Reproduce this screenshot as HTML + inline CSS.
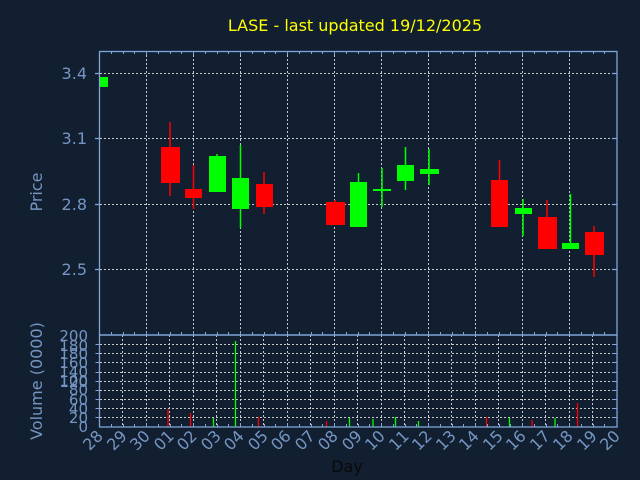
<!DOCTYPE html>
<html><head><meta charset="utf-8"><style>
html,body{margin:0;padding:0;background:#111f30;}
svg{display:block}
text{font-family:"DejaVu Sans","Liberation Sans",sans-serif;}
</style></head><body>
<svg width="640" height="480" viewBox="0 0 640 480" xmlns="http://www.w3.org/2000/svg">
<rect width="640" height="480" fill="#111f30"/>
<text x="355" y="31" fill="#ffff00" font-size="16" text-anchor="middle">LASE - last updated 19/12/2025</text>

<!-- price grid -->
<g stroke="#c8c8c8" stroke-width="1" stroke-dasharray="2,2" fill="none">
<line x1="100" y1="73.5" x2="617" y2="73.5"/>
<line x1="100" y1="138.5" x2="617" y2="138.5"/>
<line x1="100" y1="204.5" x2="617" y2="204.5"/>
<line x1="100" y1="269.5" x2="617" y2="269.5"/>
<line x1="146.5" y1="51" x2="146.5" y2="335"/>
<line x1="193.5" y1="51" x2="193.5" y2="335"/>
<line x1="240.5" y1="51" x2="240.5" y2="335"/>
<line x1="287.5" y1="51" x2="287.5" y2="335"/>
<line x1="334.5" y1="51" x2="334.5" y2="335"/>
<line x1="381.5" y1="51" x2="381.5" y2="335"/>
<line x1="428.5" y1="51" x2="428.5" y2="335"/>
<line x1="475.5" y1="51" x2="475.5" y2="335"/>
<line x1="522.5" y1="51" x2="522.5" y2="335"/>
<line x1="569.5" y1="51" x2="569.5" y2="335"/>
</g>
<!-- volume grid -->
<g stroke="#c8c8c8" stroke-width="1" stroke-dasharray="2,2" fill="none">
<line x1="100" y1="417.5" x2="617" y2="417.5"/>
<line x1="100" y1="408.5" x2="617" y2="408.5"/>
<line x1="100" y1="399.5" x2="617" y2="399.5"/>
<line x1="100" y1="390.5" x2="617" y2="390.5"/>
<line x1="100" y1="381.5" x2="617" y2="381.5"/>
<line x1="100" y1="372.5" x2="617" y2="372.5"/>
<line x1="100" y1="362.5" x2="617" y2="362.5"/>
<line x1="100" y1="353.5" x2="617" y2="353.5"/>
<line x1="100" y1="344.5" x2="617" y2="344.5"/>
<line x1="122.5" y1="335" x2="122.5" y2="427"/>
<line x1="146.5" y1="335" x2="146.5" y2="427"/>
<line x1="169.5" y1="335" x2="169.5" y2="427"/>
<line x1="193.5" y1="335" x2="193.5" y2="427"/>
<line x1="216.5" y1="335" x2="216.5" y2="427"/>
<line x1="240.5" y1="335" x2="240.5" y2="427"/>
<line x1="263.5" y1="335" x2="263.5" y2="427"/>
<line x1="287.5" y1="335" x2="287.5" y2="427"/>
<line x1="310.5" y1="335" x2="310.5" y2="427"/>
<line x1="334.5" y1="335" x2="334.5" y2="427"/>
<line x1="357.5" y1="335" x2="357.5" y2="427"/>
<line x1="381.5" y1="335" x2="381.5" y2="427"/>
<line x1="404.5" y1="335" x2="404.5" y2="427"/>
<line x1="428.5" y1="335" x2="428.5" y2="427"/>
<line x1="451.5" y1="335" x2="451.5" y2="427"/>
<line x1="475.5" y1="335" x2="475.5" y2="427"/>
<line x1="498.5" y1="335" x2="498.5" y2="427"/>
<line x1="522.5" y1="335" x2="522.5" y2="427"/>
<line x1="545.5" y1="335" x2="545.5" y2="427"/>
<line x1="569.5" y1="335" x2="569.5" y2="427"/>
<line x1="592.5" y1="335" x2="592.5" y2="427"/>
</g>

<!-- candles -->
<g stroke-width="1.5">
<rect x="100" y="77" width="8" height="10" fill="#00ff00"/>
<line x1="170" y1="122" x2="170" y2="196" stroke="#ff0000"/><rect x="161" y="147" width="19" height="36" fill="#ff0000"/>
<line x1="193.5" y1="165" x2="193.5" y2="209" stroke="#ff0000"/><rect x="185" y="189" width="17" height="9" fill="#ff0000"/>
<line x1="217" y1="154" x2="217" y2="192" stroke="#00ff00"/><rect x="209" y="156" width="17" height="36" fill="#00ff00"/>
<line x1="240.5" y1="145" x2="240.5" y2="228" stroke="#00ff00"/><rect x="232" y="178" width="17" height="31" fill="#00ff00"/>
<line x1="264" y1="172" x2="264" y2="214" stroke="#ff0000"/><rect x="256" y="184" width="17" height="23" fill="#ff0000"/>
<line x1="335" y1="200" x2="335" y2="225" stroke="#ff0000"/><rect x="326" y="202" width="19" height="23" fill="#ff0000"/>
<line x1="358.5" y1="173" x2="358.5" y2="227" stroke="#00ff00"/><rect x="350" y="182" width="17" height="45" fill="#00ff00"/>
<line x1="382" y1="168" x2="382" y2="207" stroke="#00ff00"/><rect x="373" y="189" width="18" height="2" fill="#00ff00"/>
<line x1="405.5" y1="147" x2="405.5" y2="190" stroke="#00ff00"/><rect x="397" y="165" width="17" height="16" fill="#00ff00"/>
<line x1="429" y1="149" x2="429" y2="185" stroke="#00ff00"/><rect x="420" y="169" width="19" height="5" fill="#00ff00"/>
<line x1="499.5" y1="160" x2="499.5" y2="227" stroke="#ff0000"/><rect x="491" y="180" width="17" height="47" fill="#ff0000"/>
<line x1="523" y1="199" x2="523" y2="236" stroke="#00ff00"/><rect x="515" y="208" width="17" height="6" fill="#00ff00"/>
<line x1="547" y1="200" x2="547" y2="249" stroke="#ff0000"/><rect x="538" y="217" width="19" height="32" fill="#ff0000"/>
<line x1="570.5" y1="194" x2="570.5" y2="249" stroke="#00ff00"/><rect x="562" y="243" width="17" height="6" fill="#00ff00"/>
<line x1="594" y1="226" x2="594" y2="277" stroke="#ff0000"/><rect x="585" y="232" width="19" height="23" fill="#ff0000"/>
</g>

<!-- volume bars -->
<g stroke-width="1.3">
<line x1="168" y1="409" x2="168" y2="427" stroke="#ff0000"/>
<line x1="190.5" y1="413" x2="190.5" y2="427" stroke="#ff0000"/>
<line x1="213.5" y1="418" x2="213.5" y2="427" stroke="#00ff00"/>
<line x1="235.5" y1="341" x2="235.5" y2="427" stroke="#00ff00"/>
<line x1="258.5" y1="417" x2="258.5" y2="427" stroke="#ff0000"/>
<line x1="326.5" y1="421" x2="326.5" y2="427" stroke="#ff0000"/>
<line x1="349.5" y1="418" x2="349.5" y2="427" stroke="#00ff00"/>
<line x1="373" y1="419" x2="373" y2="427" stroke="#00ff00"/>
<line x1="395.5" y1="417" x2="395.5" y2="427" stroke="#00ff00"/>
<line x1="418.5" y1="421" x2="418.5" y2="427" stroke="#00ff00"/>
<line x1="486.5" y1="417" x2="486.5" y2="427" stroke="#ff0000"/>
<line x1="509.5" y1="418" x2="509.5" y2="427" stroke="#00ff00"/>
<line x1="532" y1="420" x2="532" y2="427" stroke="#ff0000"/>
<line x1="555" y1="418" x2="555" y2="427" stroke="#00ff00"/>
<line x1="577.5" y1="403" x2="577.5" y2="427" stroke="#ff0000"/>
</g>

<!-- axes frames -->
<g stroke="#7fa6d8" stroke-width="1.3" fill="none">
<rect x="99.5" y="51.5" width="517.5" height="283.5"/>
<rect x="99.5" y="335" width="517.5" height="92"/>
<line x1="99.5" y1="73.5" x2="95" y2="73.5"/>
<line x1="99.5" y1="138.5" x2="95" y2="138.5"/>
<line x1="99.5" y1="204.5" x2="95" y2="204.5"/>
<line x1="99.5" y1="269.5" x2="95" y2="269.5"/>
<line x1="617" y1="73.5" x2="612" y2="73.5"/>
<line x1="617" y1="138.5" x2="612" y2="138.5"/>
<line x1="617" y1="204.5" x2="612" y2="204.5"/>
<line x1="617" y1="269.5" x2="612" y2="269.5"/>
</g>
<g stroke="#7fa6d8" stroke-width="1">
<path d="M111.5 51v3M123.5 51v3M134.5 51v3M146.5 51v4M158.5 51v3M170.5 51v3M181.5 51v3M193.5 51v4M205.5 51v3M217.5 51v3M228.5 51v3M240.5 51v4M252.5 51v3M264.5 51v3M275.5 51v3M287.5 51v4M299.5 51v3M311.5 51v3M322.5 51v3M334.5 51v4M346.5 51v3M358.5 51v3M369.5 51v3M381.5 51v4M393.5 51v3M405.5 51v3M416.5 51v3M428.5 51v4M440.5 51v3M452.5 51v3M463.5 51v3M475.5 51v4M487.5 51v3M499.5 51v3M510.5 51v3M522.5 51v4M534.5 51v3M546.5 51v3M557.5 51v3M569.5 51v4M581.5 51v3M593.5 51v3M604.5 51v3"/>
<path d="M111.5 335v-3M123.5 335v-3M134.5 335v-3M146.5 335v-4M158.5 335v-3M170.5 335v-3M181.5 335v-3M193.5 335v-4M205.5 335v-3M217.5 335v-3M228.5 335v-3M240.5 335v-4M252.5 335v-3M264.5 335v-3M275.5 335v-3M287.5 335v-4M299.5 335v-3M311.5 335v-3M322.5 335v-3M334.5 335v-4M346.5 335v-3M358.5 335v-3M369.5 335v-3M381.5 335v-4M393.5 335v-3M405.5 335v-3M416.5 335v-3M428.5 335v-4M440.5 335v-3M452.5 335v-3M463.5 335v-3M475.5 335v-4M487.5 335v-3M499.5 335v-3M510.5 335v-3M522.5 335v-4M534.5 335v-3M546.5 335v-3M557.5 335v-3M569.5 335v-4M581.5 335v-3M593.5 335v-3M604.5 335v-3"/>
<path d="M111.5 427v-3M123.5 427v-3M134.5 427v-3M146.5 427v-4M158.5 427v-3M170.5 427v-3M181.5 427v-3M193.5 427v-4M205.5 427v-3M217.5 427v-3M228.5 427v-3M240.5 427v-4M252.5 427v-3M264.5 427v-3M275.5 427v-3M287.5 427v-4M299.5 427v-3M311.5 427v-3M322.5 427v-3M334.5 427v-4M346.5 427v-3M358.5 427v-3M369.5 427v-3M381.5 427v-4M393.5 427v-3M405.5 427v-3M416.5 427v-3M428.5 427v-4M440.5 427v-3M452.5 427v-3M463.5 427v-3M475.5 427v-4M487.5 427v-3M499.5 427v-3M510.5 427v-3M522.5 427v-4M534.5 427v-3M546.5 427v-3M557.5 427v-3M569.5 427v-4M581.5 427v-3M593.5 427v-3M604.5 427v-3"/>
<path d="M617 417.5h-5M617 408.5h-5M617 399.5h-5M617 390.5h-5M617 381.5h-5M617 372.5h-5M617 362.5h-5M617 353.5h-5M617 344.5h-5M99.5 417.5h-4M99.5 408.5h-4M99.5 399.5h-4M99.5 390.5h-4M99.5 381.5h-4M99.5 372.5h-4M99.5 362.5h-4M99.5 353.5h-4M99.5 344.5h-4"/>
</g>

<!-- y labels -->
<g fill="#7596c3" font-size="16" text-anchor="end">
<text x="87" y="79">3.4</text>
<text x="87" y="144">3.1</text>
<text x="87" y="210">2.8</text>
<text x="87" y="275">2.5</text>
</g>
<g fill="#7596c3" font-size="15" text-anchor="end">
<text x="88" y="341">200</text>
<text x="88" y="359">180</text>
<text x="88" y="368">160</text>
<text x="88" y="377">140</text>
<text x="88" y="387">120</text>
<text x="88" y="351">180</text>
<text x="88" y="386">100</text>
<text x="88" y="395">80</text>
<text x="88" y="405">60</text>
<text x="88" y="414">40</text>
<text x="88" y="423">20</text>
<text x="88" y="432">0</text>
</g>
<text transform="translate(42,192) rotate(-90)" fill="#7596c3" font-size="16" text-anchor="middle">Price</text>
<text transform="translate(42,381) rotate(-90)" fill="#7596c3" font-size="16" text-anchor="middle">Volume (0000)</text>

<!-- x labels -->
<g fill="#7596c3" font-size="16" text-anchor="end">
<text transform="translate(104,437) rotate(-45)">28</text>
<text transform="translate(128,437) rotate(-45)">29</text>
<text transform="translate(151,437) rotate(-45)">30</text>
<text transform="translate(175,437) rotate(-45)">01</text>
<text transform="translate(198,437) rotate(-45)">02</text>
<text transform="translate(222,437) rotate(-45)">03</text>
<text transform="translate(245,437) rotate(-45)">04</text>
<text transform="translate(269,437) rotate(-45)">05</text>
<text transform="translate(292,437) rotate(-45)">06</text>
<text transform="translate(316,437) rotate(-45)">07</text>
<text transform="translate(339,437) rotate(-45)">08</text>
<text transform="translate(363,437) rotate(-45)">09</text>
<text transform="translate(386,437) rotate(-45)">10</text>
<text transform="translate(410,437) rotate(-45)">11</text>
<text transform="translate(433,437) rotate(-45)">12</text>
<text transform="translate(457,437) rotate(-45)">13</text>
<text transform="translate(480,437) rotate(-45)">14</text>
<text transform="translate(504,437) rotate(-45)">15</text>
<text transform="translate(527,437) rotate(-45)">16</text>
<text transform="translate(551,437) rotate(-45)">17</text>
<text transform="translate(574,437) rotate(-45)">18</text>
<text transform="translate(598,437) rotate(-45)">19</text>
<text transform="translate(621,437) rotate(-45)">20</text>
</g>
<text x="347" y="472" fill="#0a0a0a" font-size="16" text-anchor="middle">Day</text>
</svg>
</body></html>
